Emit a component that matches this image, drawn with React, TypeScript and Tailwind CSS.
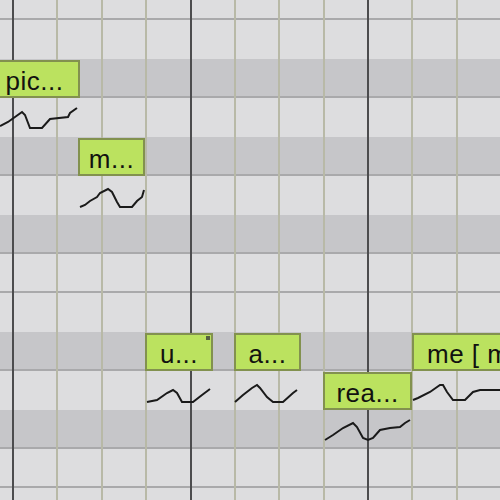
import React from "react";

// piano-roll rows from the top (starts 19px above the window)
const rows: { dark: boolean; line: boolean }[] = [
  { dark: false, line: true },
  { dark: false, line: false },
  { dark: true, line: true },
  { dark: false, line: false },
  { dark: true, line: true },
  { dark: false, line: false },
  { dark: true, line: true },
  { dark: false, line: true },
  { dark: false, line: false },
  { dark: true, line: true },
  { dark: false, line: false },
  { dark: true, line: true },
  { dark: false, line: true },
  { dark: false, line: false },
];

const notes = [
  { label: "pic...", left: -11, top: 60, width: 91, align: "center" },
  { label: "m...", left: 78, top: 138, width: 67, align: "center" },
  { label: "u...", left: 145, top: 333, width: 68, align: "center", mark: true },
  { label: "a...", left: 234, top: 333, width: 67, align: "center" },
  { label: "rea...", left: 323, top: 372, width: 89, align: "center" },
  { label: "me [ m e ]", left: 412, top: 333, width: 160, align: "left" },
];

const curves = [
  "0,126 8,122 15,117 22,112 25,115 30,128 42,128 50,119 68,117 70,113 77,108",
  "80,207 85,205 90,201 97,197 100,193 108,189 112,192 117,202 120,207 132,207 137,201 142,197 144,190",
  "147,402 157,400 167,393 173,390 177,393 182,402 193,402 202,395 210,389",
  "235,402 243,395 252,388 257,385 260,388 267,397 273,402 283,402 293,393 297,390",
  "325,440 333,435 343,428 353,423 357,427 363,438 368,440 373,438 380,430 390,428 400,427 405,423 410,420",
  "413,400 418,398 430,392 440,385 443,385 447,392 453,400 465,400 473,392 480,390 500,390",
];

export default function App() {
  return (
    <div className="relative h-[500px] w-[500px] overflow-hidden bg-[#dcdcde] font-['Liberation_Sans',Arial,sans-serif]">
      <div className="mt-[-19px] flex flex-col">
        {rows.map((r, i) => (
          <div
            key={i}
            className={`h-[39px] shrink-0 ${r.dark ? "bg-[#c6c6c9]" : "bg-[#dddddf]"} ${
              r.line ? "border-b-2 border-[#a9a9ab]" : ""
            }`}
          />
        ))}
      </div>

      <div className="absolute inset-y-0 left-0 ml-[-32.375px] flex">
        {Array.from({ length: 13 }).map((_, k) => (
          <div
            key={k}
            className={`h-full w-[44.375px] shrink-0 border-l-2 ${
              k % 4 === 1 ? "border-[#4c4c4e]" : "border-[#b8b9a7]"
            }`}
          />
        ))}
      </div>

      {notes.map((n) => (
        <div
          key={n.label}
          className={`absolute flex h-[38px] items-center overflow-hidden border-2 border-[#82914f] bg-[#bbe25f] pt-[3px] text-[26px] leading-none tracking-[0.5px] text-[#121210] whitespace-nowrap ${
            n.align === "center" ? "justify-center" : "justify-start pl-[13px]"
          }`}
          style={{ left: n.left, top: n.top, width: n.width }}
        >
          {n.label}
          {n.mark && <span className="absolute right-[1px] top-[1px] h-[4px] w-[4px] bg-[#556040]" />}
        </div>
      ))}

      <svg className="absolute inset-0" width="500" height="500" viewBox="0 0 500 500">
        {curves.map((pts, i) => (
          <polyline key={i} points={pts} fill="none" stroke="#1a1a1a" strokeWidth="2" strokeLinejoin="miter" />
        ))}
      </svg>
    </div>
  );
}
